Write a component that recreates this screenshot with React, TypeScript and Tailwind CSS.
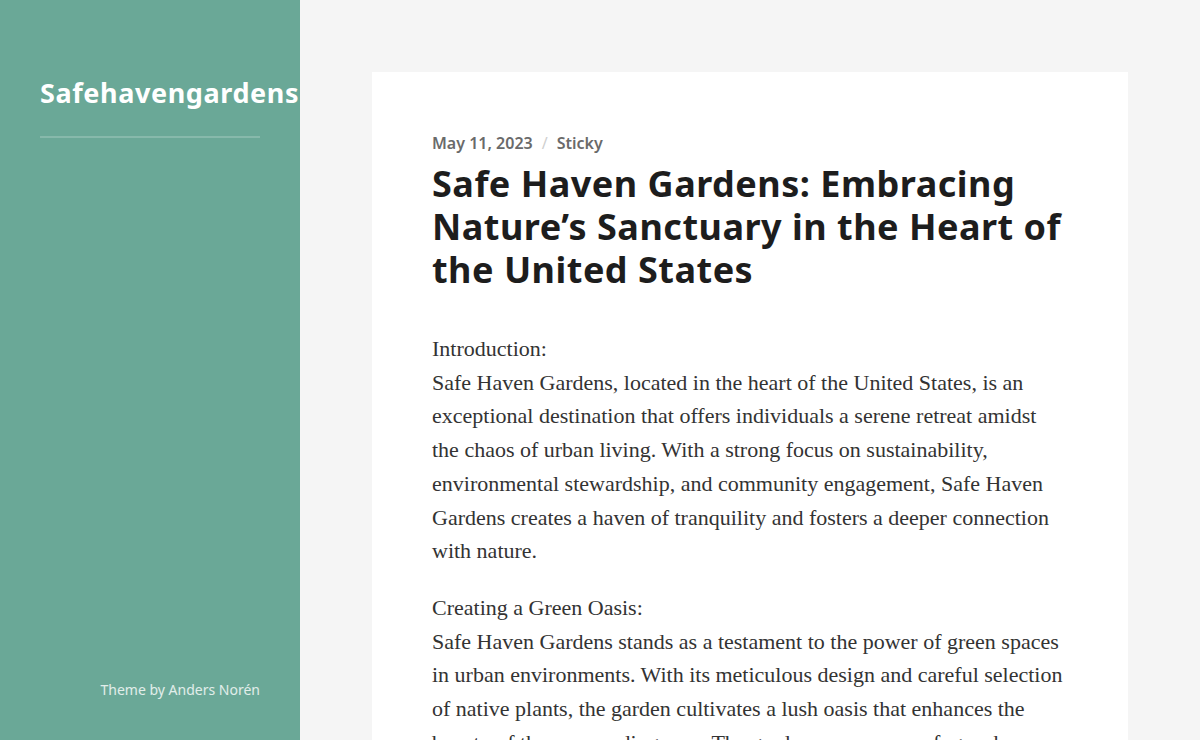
import React from 'react';

const intro = [
  'Safe Haven Gardens, located in the heart of the United States, is an',
  'exceptional destination that offers individuals a serene retreat amidst',
  'the chaos of urban living. With a strong focus on sustainability,',
  'environmental stewardship, and community engagement, Safe Haven',
  'Gardens creates a haven of tranquility and fosters a deeper connection',
  'with nature.',
];

const oasis = [
  'Safe Haven Gardens stands as a testament to the power of green spaces',
  'in urban environments. With its meticulous design and careful selection',
  'of native plants, the garden cultivates a lush oasis that enhances the',
  'beauty of the surrounding area. The gardens serve as a refuge where',
  'visitors can escape the hustle and bustle of everyday life.',
];

const Lines = ({ lines }: { lines: string[] }) => (
  <>
    {lines.map((l, i) => (
      <React.Fragment key={i}>
        {l}
        {i < lines.length - 1 && <br />}
      </React.Fragment>
    ))}
  </>
);

export default function App() {
  return (
    <div className="flex h-screen overflow-hidden bg-[#f5f5f5]">
      <aside className="w-[300px] shrink-0 h-screen bg-[#6aa897] px-10 pt-[72px] pb-10 flex flex-col justify-between overflow-hidden">
        <div>
          <h1 className="text-white text-[27px] font-bold leading-[42px] whitespace-nowrap font-['Noto_Sans',sans-serif] tracking-[0.6px]">
            Safehavengardens
          </h1>
          <div className="mt-[22px] h-[2px] bg-white/20" />
        </div>
        <p className="text-right text-[14px] text-white/80 font-['Noto_Sans',sans-serif]">
          Theme by Anders Norén
        </p>
      </aside>

      <main className="flex-1 px-[72px] pt-[72px]">
        <article className="bg-white px-[60px] pt-[60px] pb-16">
          <div className="flex items-center gap-[9px] text-[16px] font-semibold text-[#6a6a6a] font-['Noto_Sans',sans-serif] leading-[22px]">
            <span>May 11, 2023</span>
            <span className="text-[#cfcfcf] font-normal">/</span>
            <span>Sticky</span>
          </div>
          <h2 className="mt-[8px] text-[36px] font-bold leading-[43px] text-[#1d1d1d] font-['Noto_Sans',sans-serif] tracking-[0.5px] whitespace-nowrap">
            Safe Haven Gardens: Embracing
            <br />
            Nature’s Sanctuary in the Heart of
            <br />
            the United States
          </h2>
          <div className="mt-[41px] text-[22px] leading-[33.7px] text-[#333] font-['Liberation_Serif',serif] whitespace-nowrap">
            <p>
              Introduction:
              <br />
              <Lines lines={intro} />
            </p>
            <p className="mt-[23px]">
              Creating a Green Oasis:
              <br />
              <Lines lines={oasis} />
            </p>
          </div>
        </article>
      </main>
    </div>
  );
}
